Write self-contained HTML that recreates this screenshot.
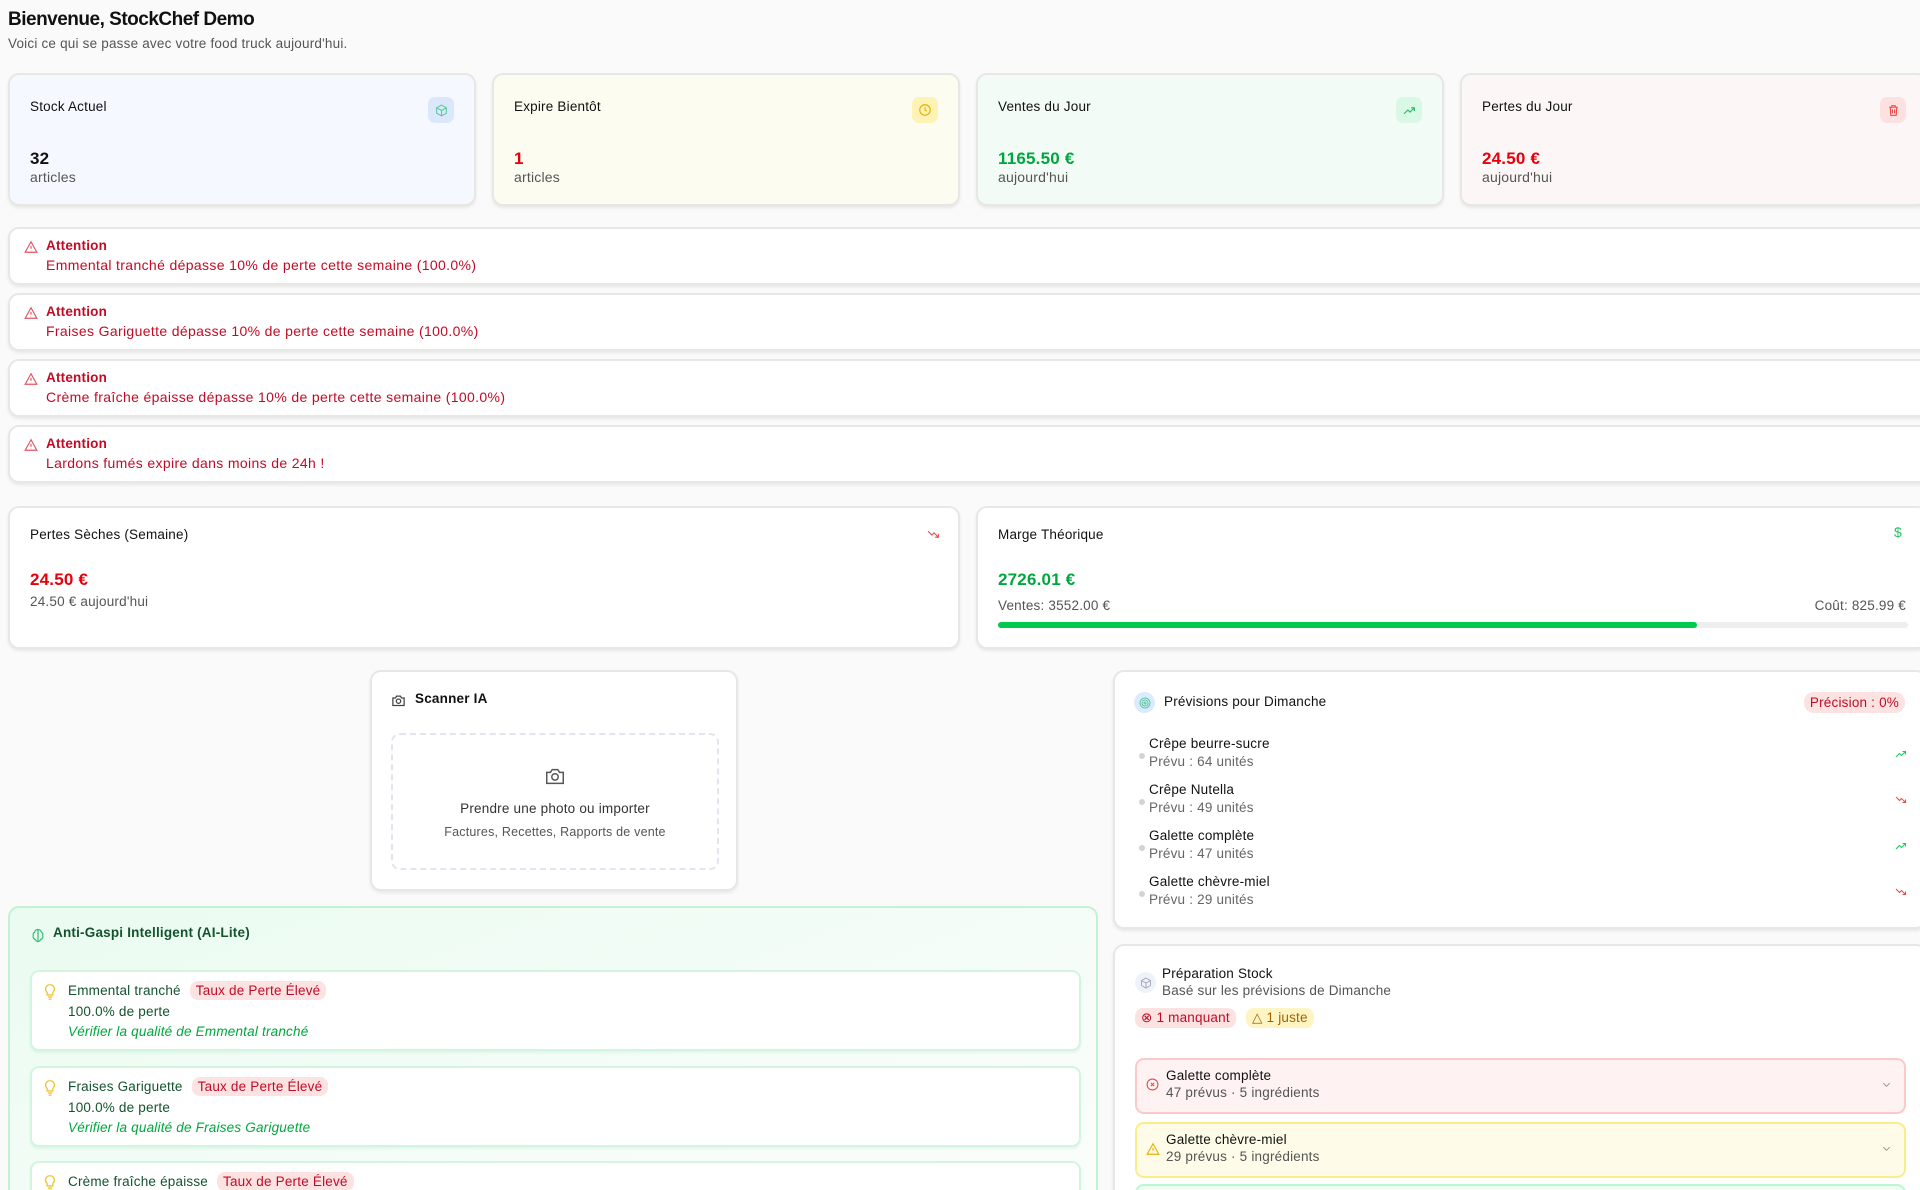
<!DOCTYPE html>
<html><head><meta charset="utf-8"><style>
*{box-sizing:border-box;margin:0;padding:0}
html,body{width:1920px;height:1190px;overflow:hidden}
body{background:#fafafa;font-family:"Liberation Sans",sans-serif;color:#111;letter-spacing:.2px}
#w{position:relative;width:1920px;height:1190px;overflow:hidden}
.a{position:absolute}
.card{position:absolute;background:#fff;border:2px solid #e7e7e5;border-radius:11px;box-shadow:0 2px 3px rgba(0,0,0,.08)}
.st{top:73px;height:133px;width:468px}
.st .t{position:absolute;left:20px;top:24px;font-size:13.5px;font-weight:500}
.st .ic{position:absolute;right:20px;top:22px;width:26px;height:26px;border-radius:7px;display:flex;align-items:center;justify-content:center}
.st .v{position:absolute;left:20px;top:74px;font-size:17px;font-weight:700}
.st .s{position:absolute;left:20px;top:94px;font-size:14px;color:#555}
.al{left:8px;width:1930px;height:58px}
.al svg{position:absolute;left:14px;top:11px}
.al .h{position:absolute;left:36px;top:9px;font-size:13.5px;color:#c10b26;font-weight:600}
.al .m{position:absolute;left:36px;top:28px;font-size:14px;color:#c10b26;letter-spacing:.35px}
.red{color:#e7000b}.grn{color:#00a63e}
.gi{position:absolute;left:20px;width:1051px;height:81px;background:#fff;border:2px solid #d3f5df;border-radius:9px;box-shadow:0 2px 2px rgba(0,160,80,.08)}
.gi svg{position:absolute;left:12px;top:12px}
.gi .n{position:absolute;left:36px;top:9px;font-size:13.5px;color:#14532d;display:flex;align-items:center;gap:9px}
.badge{background:#fde2e2;color:#c10b26;border-radius:8px;padding:2px 6px;font-size:13.5px}
.gi .p{position:absolute;left:36px;top:32px;font-size:13.5px;color:#14532d}
.gi .i{position:absolute;left:36px;top:52px;font-size:13.5px;color:#00a63e;font-style:italic}
.pv{position:absolute;left:24px;width:768px}
.pv .dot{position:absolute;left:0;top:17px;width:6px;height:6px;border-radius:50%;background:#d4d4d4}
.pv .n{position:absolute;left:10px;top:0;font-size:13.5px;font-weight:500}
.pv .u{position:absolute;left:10px;top:18px;font-size:13.5px;color:#666}
.pv svg{position:absolute;right:0;top:12px}
.pi{position:absolute;left:20px;width:771px;height:56px;border-radius:9px;border:2px solid}
.pi .n{position:absolute;left:29px;top:8px;font-size:13.5px;font-weight:500}
.pi .u{position:absolute;left:29px;top:25px;font-size:13.5px;color:#555}
.pi .ic{position:absolute;left:9px;top:18px}
.pi .ch{position:absolute;right:12px;top:19px}
</style></head><body><div id="w">
<div class="a" style="left:8px;top:9px;font-size:19px;font-weight:700;letter-spacing:-.5px">Bienvenue, StockChef Demo</div>
<div class="a" style="left:8px;top:36px;font-size:13.5px;color:#555">Voici ce qui se passe avec votre food truck aujourd'hui.</div>

<div class="card st" style="left:8px;background:#f5f8fe">
 <div class="t">Stock Actuel</div>
 <div class="ic" style="background:#dbe8fb"><svg width="13" height="13" viewBox="0 0 24 24" fill="none" stroke="#5cc9a0" stroke-width="2"><path d="M12 2l9 5v10l-9 5-9-5V7z M3 7l9 5 9-5 M12 12v10"/></svg></div>
 <div class="v">32</div><div class="s">articles</div>
</div>
<div class="card st" style="left:492px;background:#fdfcf1">
 <div class="t">Expire Bientôt</div>
 <div class="ic" style="background:#fdf3b5"><svg width="14" height="14" viewBox="0 0 24 24" fill="none" stroke="#e7b008" stroke-width="2"><circle cx="12" cy="12" r="9"/><path d="M12 7v5l3 2"/></svg></div>
 <div class="v red">1</div><div class="s">articles</div>
</div>
<div class="card st" style="left:976px;background:#f3fbf6">
 <div class="t">Ventes du Jour</div>
 <div class="ic" style="background:#d9f8e5"><svg width="13" height="13" viewBox="0 0 24 24" fill="none" stroke="#22b763" stroke-width="2"><path d="M2 18l7-7 4 4 8-8 M15 7h6v6"/></svg></div>
 <div class="v grn">1165.50 €</div><div class="s">aujourd'hui</div>
</div>
<div class="card st" style="left:1460px;background:#fdf6f6">
 <div class="t">Pertes du Jour</div>
 <div class="ic" style="background:#fde0e0"><svg width="13" height="13" viewBox="0 0 24 24" fill="none" stroke="#ef4444" stroke-width="2"><path d="M4 6h16 M9 6V3h6v3 M6 6l1 15h10l1-15 M10 10v7 M14 10v7"/></svg></div>
 <div class="v red">24.50 €</div><div class="s">aujourd'hui</div>
</div>

<div class="card al" style="top:227px"><svg width="14" height="14" viewBox="0 0 24 24" fill="none" stroke="#e05565" stroke-width="2"><path d="M12 3L2 21h20z M12 10v5 M12 18v.5"/></svg><div class="h">Attention</div><div class="m">Emmental tranché dépasse 10% de perte cette semaine (100.0%)</div></div>
<div class="card al" style="top:293px"><svg width="14" height="14" viewBox="0 0 24 24" fill="none" stroke="#e05565" stroke-width="2"><path d="M12 3L2 21h20z M12 10v5 M12 18v.5"/></svg><div class="h">Attention</div><div class="m">Fraises Gariguette dépasse 10% de perte cette semaine (100.0%)</div></div>
<div class="card al" style="top:359px"><svg width="14" height="14" viewBox="0 0 24 24" fill="none" stroke="#e05565" stroke-width="2"><path d="M12 3L2 21h20z M12 10v5 M12 18v.5"/></svg><div class="h">Attention</div><div class="m">Crème fraîche épaisse dépasse 10% de perte cette semaine (100.0%)</div></div>
<div class="card al" style="top:425px"><svg width="14" height="14" viewBox="0 0 24 24" fill="none" stroke="#e05565" stroke-width="2"><path d="M12 3L2 21h20z M12 10v5 M12 18v.5"/></svg><div class="h">Attention</div><div class="m">Lardons fumés expire dans moins de 24h !</div></div>

<div class="card" style="left:8px;top:506px;width:952px;height:143px">
 <div class="a" style="left:20px;top:19px;font-size:13.5px;font-weight:500">Pertes Sèches (Semaine)</div>
 <svg class="a" style="right:18px;top:20px" width="13" height="13" viewBox="0 0 24 24" fill="none" stroke="#ef4444" stroke-width="2"><path d="M2 6l7 7 4-4 8 8 M15 17h6v-6"/></svg>
 <div class="a red" style="left:20px;top:62px;font-size:17px;font-weight:700">24.50 €</div>
 <div class="a" style="left:20px;top:86px;font-size:13.5px;color:#555">24.50 € aujourd'hui</div>
</div>
<div class="card" style="left:976px;top:506px;width:952px;height:143px">
 <div class="a" style="left:20px;top:19px;font-size:13.5px;font-weight:500">Marge Théorique</div>
 <div class="a" style="right:24px;top:16px;font-size:14px;color:#22c55e">$</div>
 <div class="a grn" style="left:20px;top:62px;font-size:17px;font-weight:700">2726.01 €</div>
 <div class="a" style="left:20px;top:90px;font-size:13.5px;color:#555">Ventes: 3552.00 €</div>
 <div class="a" style="right:20px;top:90px;font-size:13.5px;color:#555">Coût: 825.99 €</div>
 <div class="a" style="left:20px;top:114px;width:910px;height:6px;border-radius:3px;background:#eeeeee"><div style="width:699px;height:6px;border-radius:3px;background:#00c950"></div></div>
</div>

<div class="card" style="left:370px;top:670px;width:368px;height:221px">
 <svg class="a" style="left:19px;top:21px" width="15" height="15" viewBox="0 0 24 24" fill="none" stroke="#444" stroke-width="2"><path d="M3 8h4l2-3h6l2 3h4v12H3z"/><circle cx="12" cy="13" r="3.5"/></svg>
 <div class="a" style="left:43px;top:19px;font-size:13.5px;font-weight:600">Scanner IA</div>
 <div class="a" style="left:19px;top:61px;width:328px;height:137px;border:2px dashed #e3e5ee;border-radius:9px;text-align:center">
  <svg style="margin-top:30px" width="22" height="22" viewBox="0 0 24 24" fill="none" stroke="#555" stroke-width="1.6"><path d="M3 8h4l2-3h6l2 3h4v12H3z"/><circle cx="12" cy="13" r="3.5"/></svg>
  <div style="font-size:13.5px;color:#333;margin-top:9px;font-weight:500">Prendre une photo ou importer</div>
  <div style="font-size:12.5px;color:#555;margin-top:9px">Factures, Recettes, Rapports de vente</div>
 </div>
</div>

<div class="a" style="left:8px;top:906px;width:1090px;height:420px;border:2px solid #c4f1d4;border-radius:11px;background:linear-gradient(160deg,#eafbf1,#f7fdf9 60%,#fbfefc)">
 <svg class="a" style="left:20px;top:19px" width="16" height="17" viewBox="0 0 24 24" fill="none" stroke="#2fbf71" stroke-width="1.8"><path d="M12 3c-3 0-5 2-5 4-2 1-3 3-2 5-1 2 0 5 3 6 1 2 3 3 4 3s3-1 4-3c3-1 4-4 3-6 1-2 0-4-2-5 0-2-2-4-5-4z M12 3v18"/></svg>
 <div class="a" style="left:43px;top:17px;font-size:13.5px;font-weight:600;color:#14532d">Anti-Gaspi Intelligent (AI-Lite)</div>
 <div class="gi" style="top:62px"><svg width="12" height="16" viewBox="0 0 16 22" fill="none" stroke="#f2c230" stroke-width="1.8"><path d="M8 1a6 6 0 0 0-4 10.5V15h8v-3.5A6 6 0 0 0 8 1z M5 18h6 M6 21h4"/></svg><div class="n">Emmental tranché <span class="badge">Taux de Perte Élevé</span></div><div class="p">100.0% de perte</div><div class="i">Vérifier la qualité de Emmental tranché</div></div>
 <div class="gi" style="top:158px"><svg width="12" height="16" viewBox="0 0 16 22" fill="none" stroke="#f2c230" stroke-width="1.8"><path d="M8 1a6 6 0 0 0-4 10.5V15h8v-3.5A6 6 0 0 0 8 1z M5 18h6 M6 21h4"/></svg><div class="n">Fraises Gariguette <span class="badge">Taux de Perte Élevé</span></div><div class="p">100.0% de perte</div><div class="i">Vérifier la qualité de Fraises Gariguette</div></div>
 <div class="gi" style="top:253px"><svg width="12" height="16" viewBox="0 0 16 22" fill="none" stroke="#f2c230" stroke-width="1.8"><path d="M8 1a6 6 0 0 0-4 10.5V15h8v-3.5A6 6 0 0 0 8 1z M5 18h6 M6 21h4"/></svg><div class="n">Crème fraîche épaisse <span class="badge">Taux de Perte Élevé</span></div></div>
</div>

<div class="card" style="left:1113px;top:670px;width:814px;height:259px">
 <div class="a" style="left:19px;top:20px;width:21px;height:21px;border-radius:50%;background:#dbeafe;display:flex;align-items:center;justify-content:center"><svg width="12" height="12" viewBox="0 0 24 24" fill="none" stroke="#5cc9a0" stroke-width="2"><circle cx="12" cy="12" r="10"/><circle cx="12" cy="12" r="6"/><circle cx="12" cy="12" r="2"/></svg></div>
 <div class="a" style="left:49px;top:22px;font-size:13.5px;font-weight:500">Prévisions pour Dimanche</div>
 <div class="a" style="right:20px;top:20px;background:#fde2e2;color:#c10b26;border-radius:10px;padding:3px 6px;font-size:13.5px;font-weight:500">Précision : 0%</div>
 <div class="pv" style="top:64px"><div class="dot"></div><div class="n">Crêpe beurre-sucre</div><div class="u">Prévu : 64 unités</div><svg width="12" height="12" viewBox="0 0 24 24" fill="none" stroke="#22c55e" stroke-width="2"><path d="M2 18l7-7 4 4 8-8 M15 7h6v6"/></svg></div>
 <div class="pv" style="top:110px"><div class="dot"></div><div class="n">Crêpe Nutella</div><div class="u">Prévu : 49 unités</div><svg width="12" height="12" viewBox="0 0 24 24" fill="none" stroke="#ef4444" stroke-width="2"><path d="M2 6l7 7 4-4 8 8 M15 17h6v-6"/></svg></div>
 <div class="pv" style="top:156px"><div class="dot"></div><div class="n">Galette complète</div><div class="u">Prévu : 47 unités</div><svg width="12" height="12" viewBox="0 0 24 24" fill="none" stroke="#22c55e" stroke-width="2"><path d="M2 18l7-7 4 4 8-8 M15 7h6v6"/></svg></div>
 <div class="pv" style="top:202px"><div class="dot"></div><div class="n">Galette chèvre-miel</div><div class="u">Prévu : 29 unités</div><svg width="12" height="12" viewBox="0 0 24 24" fill="none" stroke="#ef4444" stroke-width="2"><path d="M2 6l7 7 4-4 8 8 M15 17h6v-6"/></svg></div>
</div>

<div class="card" style="left:1113px;top:944px;width:814px;height:320px">
 <div class="a" style="left:20px;top:26px;width:21px;height:21px;border-radius:50%;background:#eef2fb;display:flex;align-items:center;justify-content:center"><svg width="12" height="12" viewBox="0 0 24 24" fill="none" stroke="#aab" stroke-width="2"><path d="M12 2l9 5v10l-9 5-9-5V7z M3 7l9 5 9-5 M12 12v10"/></svg></div>
 <div class="a" style="left:47px;top:20px;font-size:13.5px;font-weight:500">Préparation Stock</div>
 <div class="a" style="left:47px;top:37px;font-size:13.5px;color:#555">Basé sur les prévisions de Dimanche</div>
 <div class="a" style="left:20px;top:62px;background:#fde2e2;color:#c10b26;border-radius:8px;padding:2px 6px;font-size:13.5px">⊗ 1 manquant</div>
 <div class="a" style="left:131px;top:62px;background:#fef5c3;color:#a16207;border-radius:8px;padding:2px 6px;font-size:13.5px">△ 1 juste</div>
 <div class="pi" style="top:112px;background:#fef2f2;border-color:#fcc9c9"><svg class="ic" width="13" height="13" viewBox="0 0 24 24" fill="none" stroke="#e5484d" stroke-width="2"><circle cx="12" cy="12" r="10"/><path d="M9 9l6 6 M15 9l-6 6"/></svg><div class="n">Galette complète</div><div class="u">47 prévus · 5 ingrédients</div><svg class="ch" width="11" height="11" viewBox="0 0 24 24" fill="none" stroke="#999" stroke-width="2"><path d="M5 9l7 7 7-7"/></svg></div>
 <div class="pi" style="top:176px;background:#fefce8;border-color:#fcec8a"><svg class="ic" width="14" height="14" viewBox="0 0 24 24" fill="none" stroke="#e7b008" stroke-width="2"><path d="M12 3L2 21h20z M12 10v5 M12 18v.5"/></svg><div class="n">Galette chèvre-miel</div><div class="u">29 prévus · 5 ingrédients</div><svg class="ch" width="11" height="11" viewBox="0 0 24 24" fill="none" stroke="#999" stroke-width="2"><path d="M5 9l7 7 7-7"/></svg></div>
 <div class="pi" style="top:238px;background:#f0fdf4;border-color:#bbf7d0"></div>
</div>
</div></body></html>
